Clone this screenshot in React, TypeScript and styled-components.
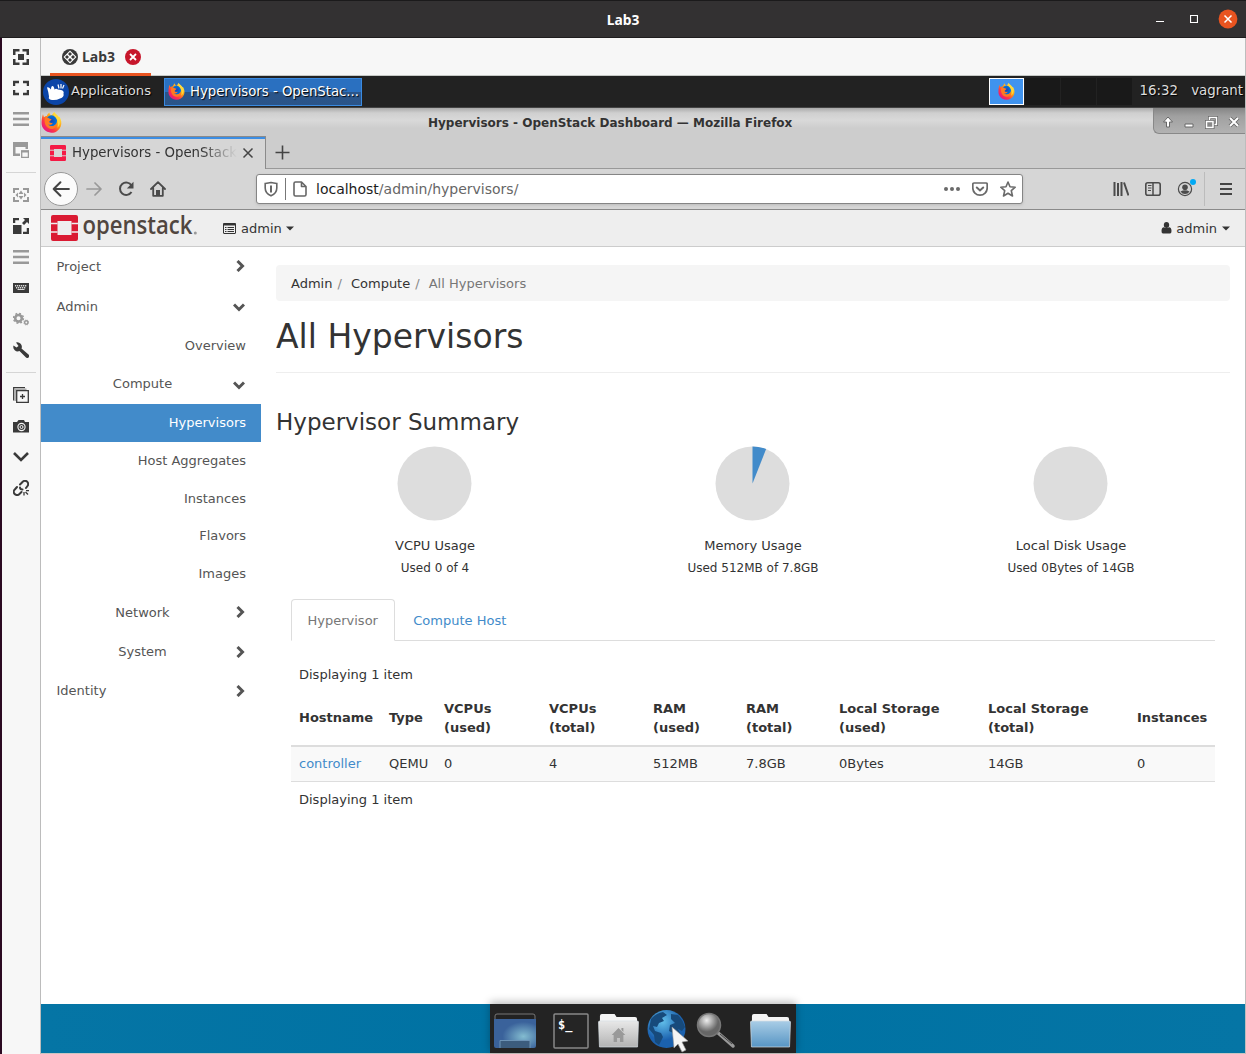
import React from "react";
import styled, { createGlobalStyle } from "styled-components";

const Global = createGlobalStyle`
  * { box-sizing: border-box; }
  html, body { margin: 0; padding: 0; background: #fff; }
  body { font-family: "DejaVu Sans", sans-serif; font-size: 13px; color: #333; overflow: hidden; }
  svg { display: block; flex: none; }
`;

/* ---------- outer window ---------- */
const Window = styled.div`
  width: 1246px; height: 1054px; display: flex; flex-direction: column; background: #f7f7f7; white-space: nowrap;
`;
const TitleBar = styled.header`
  height: 38px; flex: none; display: grid; grid-template-columns: 1fr auto 1fr; align-items: center;
  background: #333132; border-top: 1px solid #1b1a1b; border-bottom: 1px solid #1f1d1e; color: #fff;
  font: bold 13.8px "Noto Sans", sans-serif;
`;
const WindowButtons = styled.div`
  display: flex; justify-content: flex-end; align-items: center; padding-right: 8px;
`;
const MaximizeIcon = styled.svg`margin: 0 20px 0 26px;`;
const Body = styled.div`display: flex; flex: 1; min-height: 0;`;
const ToolStrip = styled.aside`
  width: 41px; flex: none; background: #f7f7f7; border-left: 2px solid #2b0a22; border-right: 1px solid #bcbcbc;
  padding-top: 3.5px;
`;
const Tool = styled.div<{ $dim?: boolean }>`
  height: 31px; display: flex; align-items: center; justify-content: center;
  color: ${p => (p.$dim ? "#999" : "#3a3a3a")};
`;
const ToolRule = styled.div`height: 14px; padding: 6.5px 4px 0; &::after { content: ""; display: block; height: 1px; background: #d5d5d5; }`;
const Screen = styled.div`flex: 1; min-width: 0; display: flex; flex-direction: column; border-right: 1px solid #bdbdbd;`;

/* ---------- viewer tabs ---------- */
const ViewerTabs = styled.div`height: 38px; flex: none; padding-left: 9px; border-bottom: 1px solid #c6c9c6;`;
const ViewerTab = styled.div`
  width: 101px; height: 38px; display: flex; align-items: center; padding: 3px 0 0 12px; border-bottom: 3px solid #e95420;
  font: bold 14px "Noto Sans", sans-serif; color: #3a3a3a;
  span { margin: 0 9px 0 4px; width: 34px; padding-bottom: 2px; }
`;

/* ---------- desktop panel ---------- */
const Panel = styled.div`
  height: 32px; flex: none; display: flex; align-items: center; background: #222; border-bottom: 1px solid #444;
  color: #ddd; font-size: 13.33px; padding: 0 2px 0 2px; text-shadow: 1px 1px 1px #000;
`;
const AppsLabel = styled.span`margin-left: 2px; width: 93px; padding-bottom: 2px; font-size: 13.1px;`;
const TaskButton = styled.div`
  width: 198px; height: 28px; border: 1px solid #3a8ae0; display: flex; align-items: center; padding-left: 3px; gap: 5px;
  background: linear-gradient(#2a70c0 0%, #2a70c0 49%, #2a558a 50%, #2b5488 100%); color: #fff; font-size: 13.25px;
`;
const Workspaces = styled.div`display: flex; margin-left: auto; gap: 1px;`;
const Workspace = styled.div<{ $active?: boolean }>`
  width: 35px; height: 27px; display: flex; align-items: center; justify-content: center;
  background: ${p => (p.$active ? "#4093ee" : "#191919")};
  border: 1px solid ${p => (p.$active ? "#fff" : "#191919")};
`;
const PanelText = styled.span<{ $w: number }>`width: ${p => p.$w}px; text-align: right; padding-bottom: 2px;`;

/* ---------- firefox ---------- */
const FoxTitle = styled.div`
  height: 28px; flex: none; display: grid; grid-template-columns: 387px auto 1fr; align-items: center;
  background: linear-gradient(#aaa 0, #cfcfcf 5px, #d9d9d9 12px, #cdcdcd 20px);
  font-weight: bold; font-size: 12px; color: #333;
`;
const FoxTitleText = styled.span`padding-top: 2px;`;
const FoxControls = styled.div`
  justify-self: end; align-self: start; width: 92px; height: 26px; border: 1px solid #888; border-top: 0; border-right: 0;
  border-bottom-left-radius: 6px; background: linear-gradient(#858585, #a0a0a0 8px, #b2b2b2);
  display: flex; align-items: center; justify-content: space-between; padding: 3px 5px 0 8px;
`;
const TabRow = styled.div`height: 33px; flex: none; display: flex; background: #cdcdcd;`;
const FoxTab = styled.div`
  width: 225px; border-top: 1px solid #8b8b8b; border-right: 1px solid #8b8b8b; background: #d6d6d6;
  box-shadow: inset 0 2px #3d8ee3; display: flex; align-items: center; padding: 0 10px 0 9px; font-size: 13.33px; color: #333;
`;
const TabTitle = styled.span`
  width: 165px; margin-left: 6px; margin-right: 5px; overflow: hidden; padding-bottom: 2px;
  mask-image: linear-gradient(90deg, #000 78%, transparent 100%);
`;
const TabSpace = styled.div`flex: 1; border-bottom: 1px solid #999; display: flex; align-items: center; padding-left: 9px; color: #444;`;
const NavBar = styled.div`
  height: 41px; flex: none; background: #d6d6d6; border-bottom: 1px solid #8a8a8a; display: flex; align-items: center;
  padding-left: 3px; color: #444;
`;
const Slot = styled.div<{ $w?: number; $dim?: boolean }>`
  width: ${p => p.$w ?? 32}px; display: flex; justify-content: center; color: ${p => (p.$dim ? "#999" : "#4b4b4b")};
`;
const BackCircle = styled.div`
  width: 34px; height: 34px; border-radius: 50%; background: #fbfbfb; border: 1px solid #999;
  display: flex; align-items: center; justify-content: center;
`;
const UrlBar = styled.div`
  width: 767px; height: 30px; margin: 0 82px 0 82px; border: 1px solid #858585; border-radius: 3px; background: #fff;
  display: flex; align-items: center; padding: 0 6px; color: #666; font-size: 14px; box-shadow: 0 1px 3px #bbb;
  b { font-weight: normal; color: #1c1c1c; }
`;
const UrlDivider = styled.i`width: 1px; height: 22px; background: #777; margin: 0 6px;`;
const UrlText = styled.span`margin: 0 auto 1px 8px;`;
const UrlActions = styled.div`display: flex; align-items: center; gap: 12px; color: #6a6a6a;`;
const NavRule = styled.i`width: 1px; height: 34px; background: #bcbcbc; margin: 0 7px 0 0;`;

/* ---------- horizon ---------- */
const Topbar = styled.div`
  height: 37px; flex: none; display: flex; align-items: center; background: #eee; border-bottom: 1px solid #ccc; padding: 0 15px 0 10px;
`;
const Menu = styled.div<{ $caret?: number }>`display: flex; align-items: center; gap: 4px; svg:last-child { margin-left: ${p => p.$caret ?? 1}px; }`;
const MenuGap = styled.div`width: 24px;`;
const Push = styled.div`flex: 1;`;
const Page = styled.div`height: 757px; flex: none; display: flex; background: #fff;`;
const SideNav = styled.nav`width: 220px; flex: none;`;
const NavItem = styled.div<{ $h: number; $level: number; $active?: boolean }>`
  height: ${p => p.$h}px; display: flex; align-items: center; padding: 0 ${p => (p.$level === 2 ? 15 : 16)}px 0 15.5px;
  justify-content: ${p => (p.$level === 2 ? "flex-end" : "space-between")};
  color: ${p => (p.$active ? "#fff" : "#555")}; background: ${p => (p.$active ? "#428bca" : "transparent")};
  span { ${p => (p.$level === 1 ? "width: 172px; text-align: center;" : "")} padding-bottom: 1px; }
`;
const ChevronIcon = styled.svg<{ $down?: boolean }>`margin-${p => (p.$down ? "top" : "bottom")}: 1px;`;
const Main = styled.main`width: 954px; margin-left: 15px; padding-top: 18px;`;
const Crumbs = styled.div`
  height: 36px; background: #f5f5f5; border-radius: 4px; padding: 0 15px 0; display: flex; align-items: center; color: #777;
  a { color: #333; } i { font-style: normal; color: #888; width: 18.5px; padding-left: 5px; flex: none; }
`;
const H1 = styled.h1`
  margin: 0; height: 72px; border-bottom: 1px solid #eee; font-weight: 400; font-size: 33px; line-height: 72px;
`;
const H3 = styled.h3`margin: 37px 0 0; font-weight: 400; font-size: 23px; line-height: 25px;`;
const Charts = styled.div`display: grid; grid-template-columns: repeat(3, 318px); margin-top: 11px; height: 154px;`;
const Chart = styled.div`display: flex; flex-direction: column; align-items: center;`;
const ChartName = styled.div`margin-top: 15px; line-height: 19px;`;
const ChartUse = styled.div`font-size: 12px; line-height: 19px; margin-top: 4px;`;
const Tabs = styled.div`display: flex; align-items: flex-end; height: 41px; margin: 0 15px; border-bottom: 1px solid #ddd; line-height: 40px;`;
const Tab = styled.div<{ $active?: boolean }>`
  color: ${p => (p.$active ? "#777" : "#428bca")};
  width: ${p => (p.$active ? 104 : 130)}px; padding-left: ${p => (p.$active ? 15.5 : 18.3)}px;
  ${p => (p.$active ? "height: 42px; margin-bottom: -1px; padding-top: 1px; border: 1px solid #ddd; border-bottom-color: #fff; border-radius: 4px 4px 0 0; background: #fff;" : "height: 40px; padding-top: 1px;")}
`;
const Count = styled.div<{ $top: number }>`margin: ${p => p.$top}px 0 0 23px; line-height: 19px;`;
const Table = styled.table`
  margin: 8px 15px 0; width: 924px; table-layout: fixed; border-collapse: separate; border-spacing: 0; line-height: 18.5px;
  th { text-align: left; padding: 8px 0 8px 8px; height: 55px; border-bottom: 2px solid #ddd; vertical-align: middle; }
  td { padding: 1px 0 0 8px; height: 35px; background: #f9f9f9; border-bottom: 1px solid #ddd; }
  a { color: #428bca; }
`;

/* ---------- desktop and dock ---------- */
const Desktop = styled.div`
  flex: 1; display: flex; justify-content: center; background: linear-gradient(90deg, #0575a5, #0072a3 40%, #0072a3 60%, #0575a5);
  border-bottom: 1px solid #c9c5c1; padding-right: 1px;
`;
const Dock = styled.div`
  width: 306px; height: 49px; background: #232323; box-shadow: 0 -2px 8px rgba(0,0,0,.28); padding: 0 4px;
  display: flex; align-items: center;
`;
const DockItem = styled.div<{ $ml: number }>`margin-left: ${p => p.$ml}px; margin-top: 4px;`;

/* ---------- drawings ---------- */
const Fox = ({ s, id }: { s: number; id: string }) => (
  <svg width={s} height={s} viewBox="0 0 32 32">
    <defs>
      <linearGradient id={id} x1="0.85" y1="0.1" x2="0.15" y2="0.9">
        <stop offset="0" stopColor="#fff44f" /><stop offset=".4" stopColor="#ff980e" />
        <stop offset=".7" stopColor="#ff3647" /><stop offset="1" stopColor="#e31587" />
      </linearGradient>
      <radialGradient id={id + "b"}><stop offset="0" stopColor="#1a45b0" /><stop offset="1" stopColor="#0078e0" /></radialGradient>
    </defs>
    <path fill={`url(#${id})`} d="M3 3.500 4.500 8C6 6.500 7.500 6 9 6 10 3 11.500 1.500 13 .8 13 3 14 4.500 16 5.500L20 0C21 3 25 4 27 8L28 7C31 12 32 17 30 22 27 29 21 32 15.500 31.500 7 31 .5 24.500 .8 16 .9 12 1.500 7 3 3.500Z" />
    <circle cx="16" cy="13.500" r="8.500" fill={`url(#${id}b)`} />
    <path fill="#ff7a22" d="M6 10C8 7.500 11 8 12.500 10L16 11C16 12.500 13 13.500 12.500 15 13 17 15.500 17 18 16.500 17.500 19 14 20.500 11 19 14 22.500 20 22.500 23.500 18 25 22 21 26 16 26 9 26 4 18 6 10Z" />
    <path fill="#ffd83a" d="M20 0C21 3 26 4.500 27.500 8.500 30 14 29.500 20 25 24 27.500 15 24 9 20 6 19 4 19 2 20 0Z" />
  </svg>
);
const Chevron = ({ down }: { down?: boolean }) => (
  <ChevronIcon $down={down} width={down ? 12 : 10} height="12" viewBox={down ? "0 0 12 12" : "0 0 10 12"}>
    <path d={down ? "M1 3.500 6 8.500 11 3.500" : "M2.500 1 7.500 6 2.500 11"} fill="none" stroke="#555" strokeWidth="3" />
  </ChevronIcon>
);
const Caret = () => <svg width="8" height="5" viewBox="0 0 8 5"><path d="M0 .5h8L4 4.500z" fill="#333" /></svg>;
const StackMark = ({ s, c, bg }: { s: number; c: string; bg: string }) => (
  <svg width={s} height={s} viewBox="0 0 26 26">
    <path fill={c} fillRule="evenodd" d="M2 0H24Q26 0 26 2V24Q26 26 24 26H2Q0 26 0 24V2Q0 0 2 0ZM6.500 6.500V19.500H19.500V6.500Z" />
    <path stroke={bg} strokeWidth="1.500" d="M0 8.500H7M19 8.500H26M0 17.500H7M19 17.500H26" />
  </svg>
);
const Ico = ({ children, s = 16 }: { children: React.ReactNode; s?: number }) => (
  <svg width={s} height={s} viewBox="0 0 16 16" fill="none" stroke="currentColor" strokeWidth="2">{children}</svg>
);
const lines = <Ico><path strokeWidth="2.600" d="M0 2.300H16M0 8H16M0 13.700H16" /></Ico>;
const tools: (React.ReactNode | "rule")[] = [
  <Tool><Ico><path strokeWidth="2.500" d="M1.250 6V1.250H6.500M9.500 1.250H14.750V6M14.750 10V14.750H9.500M6.500 14.750H1.250V10" /><path fill="currentColor" stroke="none" d="M5 5H11V11H5Z" /></Ico></Tool>,
  <Tool><Ico><path strokeWidth="2.300" d="M1.100 6V2H6M10 2H14.900V6M14.900 10V14H10M6 14H1.100V10" /></Ico></Tool>,
  <Tool $dim>{lines}</Tool>,
  <Tool $dim><Ico><path fill="currentColor" stroke="none" d="M0 0H15V7H12.500V5H2.500V11.500H7V14H0Z" /><path strokeWidth="1.300" d="M8.700 9H15.400V15.300H8.700Z" /><path d="M8 9.500H16" /></Ico></Tool>,
  "rule",
  <Tool $dim><Ico><path d="M1 6V2H6M10 2H15V6M15 10V14H10M6 14H1V10" /><path fill="currentColor" stroke="none" d="M8 3.500 10.500 7H5.500ZM8 12.500 5.500 9H10.500ZM5 5.500V10.500L2.500 8ZM11 5.500 13.500 8 11 10.500Z" /></Ico></Tool>,
  <Tool><Ico><path strokeWidth="2.300" d="M1.100 5V1.200H6M14.900 10V14.800H10" /><path fill="currentColor" stroke="none" d="M0 7H8.500V16H0ZM10 0H16V6L14 4 11 7 9 5 12 2Z" /></Ico></Tool>,
  <Tool $dim>{lines}</Tool>,
  <Tool><Ico><path fill="currentColor" stroke="none" d="M0 3H16V13H0Z" /><path stroke="#d8d8d8" strokeWidth="1.500" strokeDasharray="1.300 .7" d="M2 5.700H14M3 7.700H13" /><path stroke="#d8d8d8" strokeWidth="1" d="M4.500 9.500H11.500" /></Ico></Tool>,
  <Tool $dim><Ico><circle cx="5.500" cy="7.300" r="3.300" strokeWidth="2.600" /><circle cx="5.500" cy="7.300" r="4.900" strokeWidth="1.500" strokeDasharray="1.900 1.950" /><circle cx="13.300" cy="11.500" r="1.700" strokeWidth="1.500" /><circle cx="13.300" cy="11.500" r="2.500" strokeWidth=".8" strokeDasharray="1 1" /></Ico></Tool>,
  <Tool><Ico><path fill="currentColor" stroke="none" d="M3 .5A4.500 4.500 0 0 1 8.500 6.500L15.500 12.500A1.900 1.900 0 0 1 13 15.500L6.500 9A4.500 4.500 0 0 1 .5 3.500L3.500 5.500 5.500 4Z" /></Ico></Tool>,
  "rule",
  <Tool><Ico><path strokeWidth="1.300" d="M12 .7H.7V13.500" /><path stroke="#aaa" strokeWidth="1.500" d="M13.500 2.200H2.200V14" /><path strokeWidth="1.300" d="M3.700 3.700H15.300V15.300H3.700ZM9.500 7V12M7 9.500H12" /></Ico></Tool>,
  <Tool><Ico><path fill="currentColor" stroke="none" d="M0 4H4L5.500 2H11L12 4H16V14.500H0Z" /><circle cx="8.500" cy="9" r="3.600" stroke="#f7f7f7" strokeWidth="1.100" /><circle cx="8.500" cy="9" r="1.500" stroke="#f7f7f7" strokeWidth="1" /></Ico></Tool>,
  <Tool><Ico><path strokeWidth="2.600" d="M1 4 8 11 15 4" /></Ico></Tool>,
  <Tool><Ico><path strokeWidth="2" strokeLinecap="round" d="M7 4.500 9.500 2A3.200 3.200 0 0 1 14.500 6L13 8M4 7 1.800 9.500A3 3 0 0 0 6.200 14.200L8.500 12M7 7.500Q7 9.500 9.500 9.500" /><path strokeWidth="1.300" d="M11 12V15.500M12.500 12 15 14.500M13 10.700H16" /></Ico></Tool>,
];

const nav: [string, number, number, string][] = [
  ["Project", 39, 0, "r"], ["Admin", 41, 0, "d"], ["Overview", 37, 2, ""], ["Compute", 40, 1, "d"], ["Hypervisors", 38, 2, ""],
  ["Host Aggregates", 38, 2, ""], ["Instances", 37, 2, ""], ["Flavors", 38, 2, ""], ["Images", 38, 2, ""],
  ["Network", 39, 1, "r"], ["System", 40, 1, "r"], ["Identity", 38, 0, "r"],
];
const charts: [string, string, number][] = [
  ["VCPU Usage", "Used 0 of 4", 0], ["Memory Usage", "Used 512MB of 7.8GB", 0.06], ["Local Disk Usage", "Used 0Bytes of 14GB", 0],
];
const columns: [string[], number, string][] = [
  [["Hostname"], 90, "controller"], [["Type"], 55, "QEMU"], [["VCPUs", "(used)"], 105, "0"], [["VCPUs", "(total)"], 104, "4"],
  [["RAM", "(used)"], 93, "512MB"], [["RAM", "(total)"], 93, "7.8GB"], [["Local Storage", "(used)"], 149, "0Bytes"],
  [["Local Storage", "(total)"], 149, "14GB"], [["Instances"], 86, "0"],
];

const Pie = ({ value }: { value: number }) => {
  const a = value * Math.PI * 2;
  return (
    <svg width="76" height="75" viewBox="0 0 76 75">
      <circle cx="37.500" cy="37.500" r="37" fill="#ddd" />
      {value > 0 && <path fill="#428bca" d={`M37.5 37.5V.5A37 37 0 0 1 ${37.5 + 37 * Math.sin(a)} ${37.5 - 37 * Math.cos(a)}Z`} />}
    </svg>
  );
};

const Folder = ({ id, a, b, home }: { id: string; a: string; b: string; home?: boolean }) => (
  <svg width="41" height="36" viewBox="0 0 42 36" preserveAspectRatio="none">
    <defs><linearGradient id={id} x2="0" y2="1"><stop stopColor={a} /><stop offset="1" stopColor={b} /></linearGradient></defs>
    <path fill="#f4f4f4" d="M2 3Q2 1 4 1H17L19 4H38Q40 4 40 6V12H2Z" />
    <path fill={`url(#${id})`} stroke="#d5dde3" strokeWidth=".7" d="M.5 9Q.5 8 2 8H40Q41.500 8 41.500 9L40.500 34H1.500Z" />
    {home && <path fill="#999" d="M21 15 28 22H26V29H22.500V25H19.500V29H16V22H14Z M24 15H26V19L24 17Z" />}
  </svg>
);

export default function App() {
  return (
    <Window>
      <Global />
      <TitleBar>
        <span />
        <span>Lab3</span>
        <WindowButtons>
          <svg width="8" height="10" viewBox="0 0 8 10"><path d="M0 7.500H8" stroke="#fff" /></svg>
          <MaximizeIcon width="8" height="8" viewBox="0 0 8 8"><path d="M.5 .5H7.500V7.500H.5Z" fill="none" stroke="#fff" strokeWidth="1.200" /></MaximizeIcon>
          <svg width="20" height="20" viewBox="0 0 20 20"><circle cx="10" cy="10" r="9.400" fill="#e95420" /><path d="M6.500 6.500 13.500 13.500M13.500 6.500 6.500 13.500" stroke="#fff" strokeWidth="1.500" /></svg>
        </WindowButtons>
      </TitleBar>
      <Body>
        <ToolStrip>
          {tools.map((t, i) => t === "rule" ? <ToolRule key={i} /> : <React.Fragment key={i}>{t}</React.Fragment>)}
        </ToolStrip>
        <Screen>
          <ViewerTabs>
            <ViewerTab>
              <svg width="16" height="16" viewBox="0 0 16 16"><circle cx="8" cy="8" r="8" fill="#3a3a3a" /><path fill="#fff" d="M8 1.500 11 4.500 14.500 8 11 11.500 8 14.500 5 11.500 1.500 8 5 4.500Z" /><path fill="#3a3a3a" d="M8 3 10 5 8 7 6 5ZM8 9 10 11 8 13 6 11ZM5 6 7 8 5 10 3 8ZM11 6 13 8 11 10 9 8Z" /></svg>
              <span>Lab3</span>
              <svg width="16" height="16" viewBox="0 0 16 16"><circle cx="8" cy="8" r="8" fill="#c7162b" /><path d="M5 5 11 11M11 5 5 11" stroke="#fff" strokeWidth="1.800" /></svg>
            </ViewerTab>
          </ViewerTabs>

          <Panel>
            <svg width="26" height="26" viewBox="0 0 26 26"><circle cx="13" cy="13" r="13" fill="#0b45a8" /><path fill="#fff" d="M4 8.500Q5.500 7.500 8 10.500 8 7 9.500 7 11 7 11.500 10.500 13 9 15 10.500L18 11Q21.500 12 20.500 14.500 21.500 18 17 19.500 12 22 7 20.500 5 19.500 6 17.500 5.500 13 4 8.500Z" /><path d="M15 5.500 16 9.500M18 5V9.500M21 6 19.500 9.500" stroke="#fff" strokeWidth="1.200" /></svg>
            <AppsLabel>Applications</AppsLabel>
            <TaskButton><Fox s={17} id="f1" /><span>Hypervisors - OpenStac...</span></TaskButton>
            <Workspaces>
              <Workspace $active><Fox s={17} id="f2" /></Workspace><Workspace /><Workspace /><Workspace />
            </Workspaces>
            <PanelText $w={46}>16:32</PanelText>
            <PanelText $w={65}>vagrant</PanelText>
          </Panel>

          <FoxTitle>
            <Fox s={21} id="f3" />
            <FoxTitleText>Hypervisors - OpenStack Dashboard — Mozilla Firefox</FoxTitleText>
            <FoxControls>
              <svg width="12" height="12" viewBox="0 0 12 12"><path d="M6 1 10.500 6H7.500V11H4.500V6H1.500Z" fill="#fff" stroke="#666" /></svg>
              <svg width="10" height="12" viewBox="0 0 10 12"><path d="M1 8H9V11H1Z" fill="#fff" stroke="#666" /></svg>
              <svg width="13" height="13" viewBox="0 0 13 13"><path d="M4.500 1.500H11.500V8.500H4.500Z" fill="none" stroke="#666" strokeWidth="3" /><path d="M4.500 1.500H11.500V8.500H4.500Z" fill="none" stroke="#fff" strokeWidth="1.500" /><path d="M1.500 5.500H8V11.500H1.500Z" fill="#999" stroke="#666" strokeWidth="3" /><path d="M1.500 5.500H8V11.500H1.500Z" fill="#888" stroke="#fff" strokeWidth="1.500" /></svg>
              <svg width="12" height="12" viewBox="0 0 12 12"><path d="M2 2 10 10M10 2 2 10" stroke="#666" strokeWidth="3.800" /><path d="M2 2 10 10M10 2 2 10" stroke="#fff" strokeWidth="2" /></svg>
            </FoxControls>
          </FoxTitle>
          <TabRow>
            <FoxTab>
              <StackMark s={16} c="#f51a45" bg="#d6d6d6" />
              <TabTitle>Hypervisors - OpenStack</TabTitle>
              <svg width="12" height="12" viewBox="0 0 12 12"><path d="M1.500 1.500 10.500 10.500M10.500 1.500 1.500 10.500" stroke="#444" strokeWidth="1.500" /></svg>
            </FoxTab>
            <TabSpace><svg width="15" height="15" viewBox="0 0 15 15"><path d="M7.500 .5V14.500M.5 7.500H14.500" stroke="#444" strokeWidth="1.600" /></svg></TabSpace>
          </TabRow>
          <NavBar>
            <BackCircle><Ico s={18}><path strokeWidth="1.800" strokeLinecap="round" strokeLinejoin="round" d="M15 8H1.500M7.500 2 1.500 8 7.500 14" /></Ico></BackCircle>
            <Slot $dim><Ico><path strokeWidth="1.700" strokeLinecap="round" strokeLinejoin="round" d="M1 8H14.500M9 2 15 8 9 14" /></Ico></Slot>
            <Slot><Ico><path strokeWidth="2" d="M13.500 11A6.200 6.200 0 1 1 13.500 4.500" /><path fill="currentColor" stroke="none" d="M15.500 .8V7.500H8.800Z" /></Ico></Slot>
            <Slot><Ico><path strokeWidth="1.800" strokeLinejoin="round" strokeLinecap="round" d="M1 8 8 1.200 15 8M3.200 7V14.800H12.800V7" /><path fill="currentColor" stroke="none" d="M7 9H10V14.500H6V9Z" /></Ico></Slot>
            <UrlBar>
              <Ico><path strokeWidth="1.600" d="M8 1.500C10 2 12 2.300 13.800 2.500V7C13.800 11 11 13.500 8 14.800 5 13.500 2.200 11 2.200 7V2.500C4 2.300 6 2 8 1.500Z" /><path strokeWidth="2" d="M8 4.500V11.500" /></Ico>
              <UrlDivider />
              <Ico><path strokeWidth="1.600" strokeLinejoin="round" d="M3.500 1H9.500L14 5.500V13.500Q14 15 12.500 15H3.500Q2 15 2 13.500V2.500Q2 1 3.500 1ZM9.500 1V5.500H14" /></Ico>
              <UrlText><b>localhost</b>/admin/hypervisors/</UrlText>
              <UrlActions>
                <Ico><g fill="currentColor" stroke="none"><circle cx="2" cy="8" r="2" /><circle cx="8" cy="8" r="2" /><circle cx="14" cy="8" r="2" /></g></Ico>
                <Ico><path strokeWidth="1.700" strokeLinejoin="round" d="M2 2H14Q15.200 2 15.200 3.200V7A7.200 7.200 0 0 1 .8 7V3.200Q.8 2 2 2Z" /><path strokeLinecap="round" d="M4.800 6.500 8 9.500 11.200 6.500" /></Ico>
                <Ico><path strokeWidth="1.600" strokeLinejoin="round" d="M8 1 10 5.700 15.200 6.200 11.300 9.700 12.500 15 8 12.200 3.500 15 4.700 9.700 .8 6.200 6 5.700Z" /></Ico>
              </UrlActions>
            </UrlBar>
            <Slot><Ico><path d="M1.500 1V15M5 2V15M8.500 1V15M11 1.500 15.500 14.500" strokeWidth="2" /></Ico></Slot>
            <Slot><Ico><rect x=".8" y="1.800" width="14.400" height="12.400" rx="2" strokeWidth="1.600" /><path d="M8 2V14" strokeWidth="1.500" /><path d="M3 4.500H6.500M3 7H6.500M3 9.500H6" strokeWidth="1" /></Ico></Slot>
            <Slot $w={35}><svg width="19" height="20" viewBox="0 0 19 20"><circle cx="8" cy="10" r="6.600" fill="none" stroke="#4b4b4b" strokeWidth="1.200" /><circle cx="8" cy="8.200" r="2.800" fill="#4b4b4b" /><path fill="#4b4b4b" d="M3.500 12.500Q8 10 12.500 12.500 11 15 8 15 5 15 3.500 12.500Z" /><circle cx="16" cy="3" r="3" fill="#00a9f4" /></svg></Slot>
            <NavRule />
            <Slot $w={28}><svg width="12" height="14" viewBox="0 0 12 14"><path d="M0 2H12M0 7H12M0 12H12" stroke="#444" strokeWidth="2" /></svg></Slot>
          </NavBar>

          <Topbar>
            <svg width="148" height="36" viewBox="0 0 148 36">
              <path fill="#da1a32" fillRule="evenodd" d="M2 5H25Q27 5 27 7V29Q27 31 25 31H2Q0 31 0 29V7Q0 5 2 5ZM6.500 11V25H20.500V11Z" />
              <path stroke="#eee" strokeWidth="1.300" d="M0 13.500H6.500M20.500 13.500H27M0 22H6.500M20.500 22H27" />
              <text x="31.500" y="24" fontFamily="Open Sans, sans-serif" fontSize="24.500" fontWeight="600" fill="#51463f" textLength="110" lengthAdjust="spacingAndGlyphs">openstack</text>
              <circle cx="144.300" cy="23" r="1.500" fill="#999" />
            </svg>
            <MenuGap />
            <Menu $caret={0}>
              <svg width="14" height="11" viewBox="0 0 14 11"><path d="M1 .5H12Q12.500 .5 12.500 1V10Q12.500 10.500 12 10.500H1Q.5 10.500 .5 10V1Q.5 .5 1 .5Z" fill="none" stroke="#333" /><path d="M0 1.500H13" stroke="#333" strokeWidth="2" /><path d="M2 4.500H3.500M4.500 4.500H11M2 6.500H3.500M4.500 6.500H11M2 8.500H3.500M4.500 8.500H11" stroke="#333" /></svg>
              <span>admin</span><Caret />
            </Menu>
            <Push />
            <Menu>
              <svg width="11" height="12" viewBox="0 0 11 12"><ellipse cx="5.500" cy="3" rx="2.700" ry="3" fill="#333" /><path fill="#333" d="M.5 9Q.5 5.500 3 5.200 5.500 7 8 5.200 10.500 5.500 10.500 9 10.500 11.500 9 11.500H2Q.5 11.500 .5 9Z" /></svg>
              <span>admin</span><Caret />
            </Menu>
          </Topbar>

          <Page>
            <SideNav>
              {nav.map(([label, h, level, dir]) => (
                <NavItem key={label} $h={h} $level={level} $active={label === "Hypervisors"}>
                  <span>{label}</span>
                  {dir && <Chevron down={dir === "d"} />}
                </NavItem>
              ))}
            </SideNav>
            <Main>
              <Crumbs><a>Admin</a><i>/</i><a>Compute</a><i>/</i><span>All Hypervisors</span></Crumbs>
              <H1>All Hypervisors</H1>
              <H3>Hypervisor Summary</H3>
              <Charts>
                {charts.map(([name, use, v]) => (
                  <Chart key={name}><Pie value={v} /><ChartName>{name}</ChartName><ChartUse>{use}</ChartUse></Chart>
                ))}
              </Charts>
              <Tabs><Tab $active>Hypervisor</Tab><Tab>Compute Host</Tab></Tabs>
              <Count $top={24}>Displaying 1 item</Count>
              <Table>
                <colgroup>{columns.map(([, w], i) => <col key={i} width={w} />)}</colgroup>
                <thead><tr>{columns.map(([t], i) => <th key={i}>{t[0]}{t[1] && <><br />{t[1]}</>}</th>)}</tr></thead>
                <tbody><tr>{columns.map(([, , v], i) => <td key={i}>{i === 0 ? <a>{v}</a> : v}</td>)}</tr></tbody>
              </Table>
              <Count $top={8}>Displaying 1 item</Count>
            </Main>
          </Page>

          <Desktop>
            <Dock>
              <DockItem $ml={0}><svg width="42" height="36" viewBox="0 0 42 36"><defs><radialGradient id="desk" cx=".7" cy=".6"><stop stopColor="#83bcd0" /><stop offset="1" stopColor="#3a629b" /></radialGradient></defs><path d="M1 6V3Q1 1 3 1H39Q41 1 41 3V6" fill="#222" stroke="#777" /><path d="M0 6H42V33Q42 35 40 35H2Q0 35 0 33Z" fill="url(#desk)" /><path d="M6 35V27.500H36V35" fill="#3c5c7d" stroke="#6d93b5" /></svg></DockItem>
              <DockItem $ml={17}><svg width="36" height="36" viewBox="0 0 36 36"><rect x="1" y="1" width="34" height="34" rx="1" fill="#252525" stroke="#888" strokeWidth="1.500" /><text x="5" y="15.500" fontFamily="DejaVu Sans Mono, monospace" fontWeight="bold" fontSize="12" fill="#fff">$_</text></svg></DockItem>
              <DockItem $ml={9}><Folder id="fh" a="#e8e8e8" b="#b3b3b3" home /></DockItem>
              <DockItem $ml={8}><svg width="42" height="44" viewBox="0 0 42 44"><defs><radialGradient id="gl" cx=".4" cy=".3"><stop stopColor="#62bfea" /><stop offset="1" stopColor="#1b61ae" /></radialGradient></defs><circle cx="19.500" cy="20" r="19" fill="url(#gl)" /><path fill="#174a7b" d="M4 10Q9 4 16 3L20 6 15 9 17 12 12 14 10 18 6 17 8 22 14 24 16 28 12 36 8 33 7 26 2 20ZM24 5 31 6Q36 11 38 18L35 22 31 20 34 26 30 32 26 24 22 22 23 16 28 14 24 10Z" /><path fill="#f5f5f5" stroke="#999" strokeWidth=".6" d="M25 18 41 32 35 33 39 41 35 43 31 35 27 39Z" /></svg></DockItem>
              <DockItem $ml={6}><svg width="42" height="42" viewBox="0 0 42 42"><defs><radialGradient id="mg" cx=".4" cy=".3"><stop stopColor="#eee" /><stop offset="1" stopColor="#666" /></radialGradient></defs><path d="M22 22 38 36" stroke="#999" strokeWidth="3.500" strokeLinecap="round" /><path d="M25 24 37 34" stroke="#444" strokeWidth="1" /><circle cx="14" cy="15" r="11.500" fill="url(#mg)" stroke="#777" strokeWidth="1.500" /></svg></DockItem>
              <DockItem $ml={13}><Folder id="fb" a="#a9cde6" b="#5795c4" /></DockItem>
            </Dock>
          </Desktop>
        </Screen>
      </Body>
    </Window>
  );
}
